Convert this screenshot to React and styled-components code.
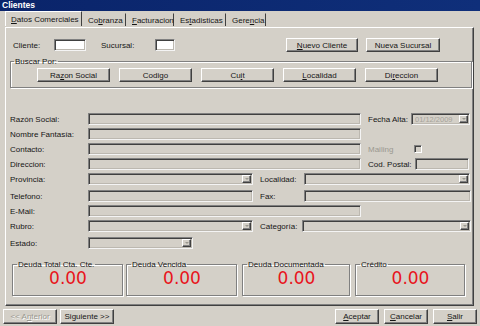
import styled, { createGlobalStyle } from "styled-components";

const FACE = "#d4d0c8";
const SHADOW = "#808080";
const DARK = "#404040";

const GlobalStyle = createGlobalStyle`
  * { box-sizing: border-box; }
  body {
    margin: 0;
    background: ${FACE};
    font-family: "Liberation Sans", Arial, sans-serif;
    font-size: 8px;
    color: #151515;
  }
`;

const Window = styled.div`
  width: 480px;
  height: 326px;
  background: ${FACE};
  display: flex;
  flex-direction: column;
  overflow: hidden;
`;

const TitleBar = styled.div`
  height: 11px;
  background: linear-gradient(90deg, #0a246a, #0f2f7a);
  color: #fff;
  font-weight: bold;
  font-size: 8.5px;
  line-height: 11px;
  padding-left: 2px;
`;

const TabStrip = styled.div`
  height: 16px;
  display: flex;
  align-items: flex-end;
  padding-left: 5px;
`;

const Tab = styled.div`
  width: ${(p) => p.$w}px;
  height: ${(p) => (p.$active ? 15 : 13)}px;
  padding-left: 5px;
  display: flex;
  align-items: center;
  white-space: nowrap;
  border-top: 1px solid ${(p) => (p.$active ? "#fff" : "transparent")};
  border-left: 1px solid ${(p) => (p.$active ? "#fff" : "transparent")};
  border-right: 1px solid ${DARK};
  margin-bottom: 1px;
`;

const Panel = styled.div`
  margin: 0 6px 0 5px;
  height: 279px;
  border-top: 1px solid #fff;
  border-left: 1px solid #fff;
  border-right: 1px solid ${DARK};
  border-bottom: 1px solid ${DARK};
  box-shadow: inset -1px -1px 0 ${SHADOW};
  padding: 10px 0 0 4px;
  display: flex;
  flex-direction: column;
`;

const TopRow = styled.div`
  height: 14px;
  display: flex;
  align-items: center;
  padding-left: 3px;
`;

const Label = styled.span`
  width: ${(p) => p.$w}px;
  margin-left: ${(p) => p.$ml || 0}px;
  flex-shrink: 0;
  white-space: nowrap;
  color: ${(p) => (p.$disabled ? "#9a9890" : "#151515")};
`;

const Box = styled.div`
  width: ${(p) => p.$w}px;
  height: ${(p) => p.$h || 12}px;
  margin-left: ${(p) => p.$ml || 0}px;
  flex-shrink: 0;
  background: ${(p) => (p.$white ? "#fff" : FACE)};
  border: 1px solid;
  border-color: ${SHADOW} #f4f4f4 #f4f4f4 ${SHADOW};
  box-shadow: inset 1px 1px 0 ${DARK}, inset -1px -1px 0 #bcb8b0;
  display: flex;
  align-items: center;
  justify-content: space-between;
  padding: 0 1px 0 3px;
  color: #a6a39b;
  font-size: 7.5px;
  overflow: hidden;
`;

const Arrow = styled.span`
  width: 9px;
  height: 8px;
  flex-shrink: 0;
  border: 1px solid;
  border-color: #fff ${DARK} ${DARK} #fff;
  box-shadow: inset -1px -1px 0 ${SHADOW};
  display: flex;
  align-items: center;
  justify-content: center;

  &::after {
    content: "";
    border-left: 2px solid transparent;
    border-right: 2px solid transparent;
    border-top: 2px solid #9a9890;
  }
`;

const Check = styled.span`
  width: 8px;
  height: 8px;
  margin-left: 4px;
  border: 1px solid;
  border-color: ${SHADOW} #fff #fff ${SHADOW};
  box-shadow: inset 1px 1px 0 ${DARK};
  background: ${FACE};
`;

const Button = styled.button`
  width: ${(p) => p.$w}px;
  height: ${(p) => p.$h || 14}px;
  margin-left: ${(p) => p.$ml || 0}px;
  flex-shrink: 0;
  padding: 0;
  background: ${FACE};
  border: 1px solid;
  border-color: #fff ${DARK} ${DARK} #fff;
  box-shadow: inset -1px -1px 0 ${SHADOW};
  font-family: inherit;
  font-size: 8px;
  color: ${(p) => (p.disabled ? "#9a9890" : "#151515")};
  text-shadow: ${(p) => (p.disabled ? "1px 1px 0 #fff" : "none")};
  white-space: nowrap;
`;

const Group = styled.fieldset`
  margin: 0;
  margin-left: ${(p) => p.$ml || 0}px;
  width: ${(p) => p.$w}px;
  height: ${(p) => (p.$h ? `${p.$h}px` : "auto")};
  flex-shrink: 0;
  padding: ${(p) => p.$pad};
  border: 1px solid ${SHADOW};
  box-shadow: inset 1px 1px 0 #fff, 1px 1px 0 #fff;
`;

const Legend = styled.legend`
  padding: 0 1px;
  line-height: 9px;
  font-size: 8px;
`;

const SearchGroup = styled(Group)`
  margin-top: 5px;
`;

const SearchRow = styled.div`
  display: flex;
  gap: 9px;
  padding-left: 23px;
`;

const Fields = styled.div`
  margin-top: 25px;
  display: flex;
  flex-direction: column;
`;

const FieldRow = styled.div`
  height: 12px;
  display: flex;
  align-items: center;
  margin-top: ${(p) => p.$mt ?? 3}px;
`;

const Totals = styled.div`
  display: flex;
  margin-top: 11px;
  padding-left: 2px;
`;

const Amount = styled.div`
  height: 15px;
  margin-top: 2px;
  font-family: "DejaVu Sans", sans-serif;
  font-size: 17px;
  line-height: 15px;
  text-align: center;
  color: #e8141c;
`;

const Footer = styled.div`
  display: flex;
  align-items: center;
  padding: 3px 3px 0 3px;
`;

const Spacer = styled.div`
  flex: 1;
`;

const Combo = ({ w, ml, value }) => (
  <Box $w={w} $ml={ml}>
    <span>{value}</span>
    <Arrow />
  </Box>
);

const totals = [
  { title: "Deuda Total Cta. Cte.", w: 111, ml: 0 },
  { title: "Deuda Vencida", w: 111, ml: 3 },
  { title: "Deuda Documentada", w: 108, ml: 5 },
  { title: "Crédito", w: 110, ml: 5 },
];

export default function App() {
  return (
    <Window>
      <GlobalStyle />
      <TitleBar>Clientes</TitleBar>
      <TabStrip>
        <Tab $w={77} $active><u>D</u>atos Comerciales</Tab>
        <Tab $w={44}>Co<u>b</u>ranza</Tab>
        <Tab $w={48}><u>F</u>acturacion</Tab>
        <Tab $w={52}>Es<u>t</u>adisticas</Tab>
        <Tab $w={40}>Gere<u>n</u>cia</Tab>
      </TabStrip>

      <Panel>
        <TopRow>
          <Label $w={41}>Cliente:</Label>
          <Box $w={32} $white />
          <Label $w={54} $ml={15}>Sucursal:</Label>
          <Box $w={20} $white />
          <Button $w={72} $ml={111}><u>N</u>uevo Cliente</Button>
          <Button $w={74} $ml={8}>Nueva Sucursal</Button>
        </TopRow>

        <SearchGroup $w={462} $pad="2px 0 5px 3px">
          <Legend>Buscar Por:</Legend>
          <SearchRow>
            <Button $w={73}>Ra<u>z</u>on Social</Button>
            <Button $w={73}>Codi<u>g</u>o</Button>
            <Button $w={73}>Cu<u>i</u>t</Button>
            <Button $w={73}><u>L</u>ocalidad</Button>
            <Button $w={73}>Di<u>r</u>eccion</Button>
          </SearchRow>
        </SearchGroup>

        <Fields>
          <FieldRow $mt={0}>
            <Label $w={78}>Razón Social:</Label>
            <Box $w={273} />
            <Label $w={43} $ml={7}>Fecha Alta:</Label>
            <Combo w={59} value="01/12/2009" />
          </FieldRow>
          <FieldRow>
            <Label $w={78}>Nombre Fantasía:</Label>
            <Box $w={273} />
          </FieldRow>
          <FieldRow>
            <Label $w={78}>Contacto:</Label>
            <Box $w={273} />
            <Label $w={42} $ml={7} $disabled>Mailing</Label>
            <Check />
          </FieldRow>
          <FieldRow>
            <Label $w={78}>Direccion:</Label>
            <Box $w={273} />
            <Label $w={47} $ml={7}>Cod. Postal:</Label>
            <Box $w={54} />
          </FieldRow>
          <FieldRow>
            <Label $w={78}>Provincia:</Label>
            <Combo w={165} />
            <Label $w={44} $ml={7}>Localidad:</Label>
            <Combo w={166} />
          </FieldRow>
          <FieldRow $mt={5}>
            <Label $w={78}>Telefono:</Label>
            <Box $w={165} />
            <Label $w={44} $ml={7}>Fax:</Label>
            <Box $w={167} />
          </FieldRow>
          <FieldRow>
            <Label $w={78}>E-Mail:</Label>
            <Box $w={273} />
          </FieldRow>
          <FieldRow>
            <Label $w={78}>Rubro:</Label>
            <Combo w={165} />
            <Label $w={42} $ml={7}>Categoría:</Label>
            <Combo w={169} />
          </FieldRow>
          <FieldRow $mt={5}>
            <Label $w={78}>Estado:</Label>
            <Combo w={105} />
          </FieldRow>
        </Fields>

        <Totals>
          {totals.map((t) => (
            <Group key={t.title} $w={t.w} $ml={t.ml} $h={36} $pad="0 3px 0 4px">
              <Legend>{t.title}</Legend>
              <Amount>0.00</Amount>
            </Group>
          ))}
        </Totals>
      </Panel>

      <Footer>
        <Button $w={54} $h={15} disabled>&lt;&lt; A<u>n</u>terior</Button>
        <Button $w={54} $h={15} $ml={3}>Siguiente &gt;&gt;</Button>
        <Spacer />
        <Button $w={44} $h={15}><u>A</u>ceptar</Button>
        <Button $w={44} $h={15} $ml={5}><u>C</u>ancelar</Button>
        <Button $w={44} $h={15} $ml={5}><u>S</u>alir</Button>
      </Footer>
    </Window>
  );
}
